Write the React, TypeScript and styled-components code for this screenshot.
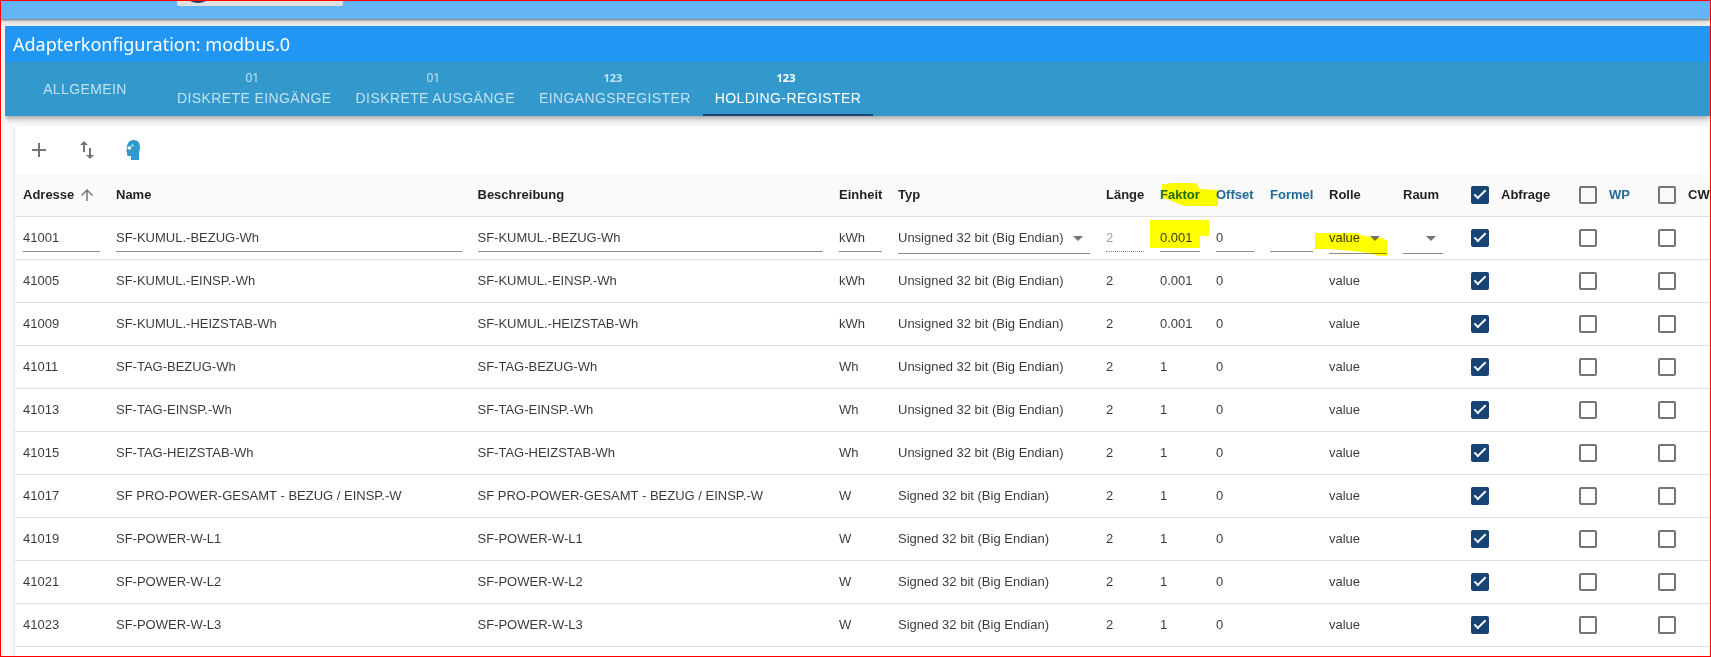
import React, { useState } from 'react';
import styled, { createGlobalStyle, css } from 'styled-components';

const GlobalStyle = createGlobalStyle`
  *, *::before, *::after { box-sizing: border-box; }
  body {
    margin: 0;
    background: #f5f5f5;
    font-family: "Liberation Sans", Arial, sans-serif;
    font-size: 13px;
    color: rgba(0, 0, 0, 0.87);
  }
`;

const Page = styled.div`
  height: 100vh;
  display: flex;
  flex-direction: column;
  overflow: hidden;
  border: 1px solid #ff0000;
`;

const AppBar = styled.header`
  flex: none;
  height: 18px;
  padding-left: 176px;
  background: #64b5f6;
  box-shadow: 0 1px 2px rgba(0, 0, 0, 0.5), 0 2px 8px rgba(0, 0, 0, 0.2);
`;

const HostChip = styled.div`
  width: 166px;
  height: 5px;
  padding-left: 11px;
  border-radius: 0 0 2px 2px;
  background: #e0e0e0;

  svg { display: block; }
`;

const Dialog = styled.main`
  flex: 1;
  min-height: 0;
  display: flex;
  flex-direction: column;
  margin: 7px 0 0 4px;
  background: #fafafa;
`;

const Title = styled.h1`
  flex: none;
  margin: 0;
  padding: 0 8px;
  background: #2196f3;
  color: #fff;
  font: 400 18px/36px "Noto Sans", "Open Sans", sans-serif;
`;

const Tabs = styled.nav`
  flex: none;
  display: flex;
  height: 54px;
  background: #3399cc;
  box-shadow: 0 2px 4px -1px rgba(0, 0, 0, 0.2), 0 4px 5px rgba(0, 0, 0, 0.14), 0 1px 10px rgba(0, 0, 0, 0.12);
  clip-path: inset(0 0 -12px 0);
`;

const Tab = styled.button<{ $active?: boolean; $plain?: boolean }>`
  display: flex;
  flex-direction: column;
  align-items: center;
  justify-content: center;
  min-width: ${(p) => (p.$plain ? 160 : 0)}px;
  padding: ${(p) => (p.$plain ? 2 : 0)}px 12px 0;
  border: 0;
  border-bottom: 2px solid ${(p) => (p.$active ? '#174475' : 'transparent')};
  background: none;
  color: ${(p) => (p.$active ? '#fff' : 'rgba(255, 255, 255, 0.7)')};
  font: 400 14px/20px "Liberation Sans", Arial, sans-serif;
  letter-spacing: 0.02857em;
  text-transform: uppercase;
  cursor: pointer;
`;

const TabMark = styled.span<{ $bold?: boolean }>`
  padding-right: 4px;
  font: ${(p) => (p.$bold ? '700 11px' : '400 12px')}/20px "Noto Sans", sans-serif;
  letter-spacing: 0;
`;

const Panel = styled.section`
  flex: 1;
  min-height: 0;
  margin: 10px 0 0 10px;
  overflow: hidden;
  border-radius: 4px 0 0 0;
  background: #fff;
  box-shadow: 0 1px 3px rgba(0, 0, 0, 0.2);
`;

const Toolbar = styled.div`
  display: flex;
  align-items: center;
  height: 48px;
`;

const IconButton = styled.button`
  display: flex;
  align-items: center;
  justify-content: center;
  width: 48px;
  height: 48px;
  padding: 0;
  border: 0;
  background: none;
  color: #757575;
  cursor: pointer;
`;

const Table = styled.table`
  width: 100%;
  table-layout: fixed;
  border-collapse: separate;
  border-spacing: 0;
`;

const cell = css`
  height: 43px;
  padding: 0 8px;
  border-bottom: 1px solid #e0e0e0;
  text-align: left;
  white-space: nowrap;
  line-height: 20px;
`;

const HeadCell = styled.th<{ $accent?: boolean }>`
  ${cell}
  background: #fafafa;
  font-weight: 700;
  color: ${(p) => (p.$accent ? '#226b96' : 'rgba(0, 0, 0, 0.87)')};
`;

const Cell = styled.td`
  ${cell}
  color: rgba(0, 0, 0, 0.78);
`;

const SortLabel = styled.span`
  display: flex;
  align-items: center;
  gap: 4px;
`;

const CheckLabel = styled.label`
  display: flex;
  align-items: center;
  gap: 12px;
  padding-left: 12px;
`;

const CheckBox = styled.input`
  appearance: none;
  flex: none;
  display: block;
  width: 18px;
  height: 18px;
  margin: 0;
  border: 2px solid #757575;
  border-radius: 2px;
  background: transparent;

  &:checked {
    border-color: #174475;
    background: #174475;
  }

  &:checked::before {
    content: '';
    display: block;
    width: 12px;
    height: 6px;
    margin: 2px 0 0 1px;
    border: solid #fff;
    border-width: 0 0 2px 2px;
    transform: rotate(-45deg);
  }
`;

const fieldBase = css`
  display: block;
  width: 100%;
  margin: 0;
  padding: 0;
  border: 0;
  border-bottom: 1px solid #8c8c8c;
  border-radius: 0;
  background: none;
  color: inherit;
  font: inherit;
  outline: 0;
`;

const Field = styled.input`
  ${fieldBase}
  height: 28px;

  &:disabled {
    border-bottom: 1px dotted #8c8c8c;
    color: rgba(0, 0, 0, 0.38);
  }
`;

const SelectWrap = styled.div`
  display: grid;
  align-items: center;

  > * { grid-area: 1 / 1; }
  svg { justify-self: end; pointer-events: none; }
`;

const Select = styled.select`
  ${fieldBase}
  appearance: none;
  height: 32px;
`;

type MarkPlace = 'head' | 'value' | 'role';

const Marked = styled.div`
  position: relative;
`;

const Highlight = styled.svg<{ $place: MarkPlace }>`
  position: absolute;
  mix-blend-mode: multiply;
  pointer-events: none;
  fill: #ffff00;
  top: ${(p) => ({ head: -2, value: -4, role: 11 })[p.$place]}px;
  left: ${(p) => ({ head: 2, value: -10, role: -14 })[p.$place]}px;
`;

const Caret = () => (
  <svg width="24" height="24" viewBox="0 0 24 24" fill="#757575"><path d="M7 10l5 5 5-5z" /></svg>
);

const Dropdown = ({ label, name }: { label: string; name: string }) => (
  <SelectWrap>
    <Select aria-label={name} defaultValue={label}><option>{label}</option></Select>
    <Caret />
  </SelectWrap>
);

type Register = { address: string; name: string; unit: string; type: string; factor: string };

const U32 = 'Unsigned 32 bit (Big Endian)';
const S32 = 'Signed 32 bit (Big Endian)';

const registers: Register[] = [
  { address: '41001', name: 'SF-KUMUL.-BEZUG-Wh', unit: 'kWh', type: U32, factor: '0.001' },
  { address: '41005', name: 'SF-KUMUL.-EINSP.-Wh', unit: 'kWh', type: U32, factor: '0.001' },
  { address: '41009', name: 'SF-KUMUL.-HEIZSTAB-Wh', unit: 'kWh', type: U32, factor: '0.001' },
  { address: '41011', name: 'SF-TAG-BEZUG-Wh', unit: 'Wh', type: U32, factor: '1' },
  { address: '41013', name: 'SF-TAG-EINSP.-Wh', unit: 'Wh', type: U32, factor: '1' },
  { address: '41015', name: 'SF-TAG-HEIZSTAB-Wh', unit: 'Wh', type: U32, factor: '1' },
  { address: '41017', name: 'SF PRO-POWER-GESAMT - BEZUG / EINSP.-W', unit: 'W', type: S32, factor: '1' },
  { address: '41019', name: 'SF-POWER-W-L1', unit: 'W', type: S32, factor: '1' },
  { address: '41021', name: 'SF-POWER-W-L2', unit: 'W', type: S32, factor: '1' },
  { address: '41023', name: 'SF-POWER-W-L3', unit: 'W', type: S32, factor: '1' },
];

const tabs = [
  { label: 'Allgemein', mark: '' },
  { label: 'Diskrete Eingänge', mark: '01' },
  { label: 'Diskrete Ausgänge', mark: '01' },
  { label: 'Eingangsregister', mark: '123' },
  { label: 'Holding-Register', mark: '123' },
];

// 0 marks the columns that share the remaining width
const columnWidths = [93, 0, 0, 59, 208, 54, 56, 54, 59, 74, 56, 108, 79, 72];

const Column = styled.col<{ $width: number }>`
  width: ${(p) => (p.$width ? `${p.$width}px` : 'auto')};
`;

const Checks = ({ address }: { address: string }) => (
  <>
    {['Abfrage', 'WP', 'CW'].map((name) => (
      <Cell key={name}>
        <CheckLabel><CheckBox type="checkbox" aria-label={`${name} ${address}`} defaultChecked={name === 'Abfrage'} /></CheckLabel>
      </Cell>
    ))}
  </>
);

const EditRow = ({ row }: { row: Register }) => (
  <tr>
    <Cell><Field aria-label="Adresse" defaultValue={row.address} /></Cell>
    <Cell><Field aria-label="Name" defaultValue={row.name} /></Cell>
    <Cell><Field aria-label="Beschreibung" defaultValue={row.name} /></Cell>
    <Cell><Field aria-label="Einheit" defaultValue={row.unit} /></Cell>
    <Cell><Dropdown name="Typ" label={row.type} /></Cell>
    <Cell><Field aria-label="Länge" defaultValue="2" disabled /></Cell>
    <Cell>
      <Marked>
        <Field aria-label="Faktor" defaultValue={row.factor} />
        <Highlight $place="value" width="59" height="28"><path d="M0 0H59V16H50V28H0z" /></Highlight>
      </Marked>
    </Cell>
    <Cell><Field aria-label="Offset" defaultValue="0" /></Cell>
    <Cell><Field aria-label="Formel" defaultValue="" /></Cell>
    <Cell>
      <Marked>
        <Dropdown name="Rolle" label="value" />
        <Highlight $place="role" width="72" height="24"><path d="M0 0H42L46 2L60 5H68L72 8V23H64L54 20L38 18L15 16H0z" /></Highlight>
      </Marked>
    </Cell>
    <Cell><Dropdown name="Raum" label="" /></Cell>
    <Checks address={row.address} />
  </tr>
);

const ViewRow = ({ row }: { row: Register }) => (
  <tr>
    <Cell>{row.address}</Cell>
    <Cell>{row.name}</Cell>
    <Cell>{row.name}</Cell>
    <Cell>{row.unit}</Cell>
    <Cell>{row.type}</Cell>
    <Cell>2</Cell>
    <Cell>{row.factor}</Cell>
    <Cell>0</Cell>
    <Cell />
    <Cell>value</Cell>
    <Cell />
    <Checks address={row.address} />
  </tr>
);

export default function App() {
  const [active, setActive] = useState(4);
  return (
    <Page>
      <GlobalStyle />
      <AppBar>
        <HostChip>
          <svg width="20" height="3"><path d="M2 0H18Q10 4 2 0z" fill="#174475" /></svg>
        </HostChip>
      </AppBar>
      <Dialog>
        <Title>Adapterkonfiguration: modbus.0</Title>
        <Tabs>
          {tabs.map((tab, i) => (
            <Tab key={tab.label} $active={i === active} $plain={!tab.mark} onClick={() => setActive(i)}>
              {tab.mark && <TabMark $bold={tab.mark === '123'}>{tab.mark}</TabMark>}
              {tab.label}
            </Tab>
          ))}
        </Tabs>
        <Panel>
          <Toolbar>
            <IconButton aria-label="Hinzufügen">
              <svg width="24" height="24" viewBox="0 0 24 24" fill="currentColor"><path d="M19 13h-6v6h-2v-6H5v-2h6V5h2v6h6v2z" /></svg>
            </IconButton>
            <IconButton aria-label="Importieren/Exportieren">
              <svg width="24" height="24" viewBox="0 0 24 24" fill="currentColor"><path d="M16 17.01V10h-2v7.01h-3L15 21l4-3.99h-3zM9 3L5 6.99h3V14h2V6.99h3L9 3z" /></svg>
            </IconButton>
            <IconButton aria-label="Expertenmodus">
              <svg width="20" height="20" viewBox="0 0 20 20">
                <path fill="#3399cc" d="M2 6Q3 0 8.500 0Q15 0 15 7Q15 10 14 12V20H6V16H3Q2 16 2 14V12L1 11L2 9z" />
                <circle cx="4.500" cy="8" r="1.800" fill="#fff" />
                <circle cx="7.500" cy="5.500" r="1" fill="#fff" />
              </svg>
            </IconButton>
          </Toolbar>
          <Table>
            <colgroup>
              {columnWidths.map((width, i) => <Column key={i} $width={width} />)}
            </colgroup>
            <thead>
              <tr>
                <HeadCell>
                  <SortLabel>
                    Adresse
                    <svg width="18" height="18" viewBox="0 0 24 24" fill="#757575"><path d="M4 12l1.410 1.410L11 7.830V20h2V7.830l5.580 5.590L20 12l-8-8-8 8z" /></svg>
                  </SortLabel>
                </HeadCell>
                <HeadCell>Name</HeadCell>
                <HeadCell>Beschreibung</HeadCell>
                <HeadCell>Einheit</HeadCell>
                <HeadCell>Typ</HeadCell>
                <HeadCell>Länge</HeadCell>
                <HeadCell $accent>
                  <Marked>
                    Faktor
                    <Highlight $place="head" width="56" height="23"><path d="M0 1H5L9 0H32L36 2L37 6L56 7V23H24L16 21L8 17L0 15z" /></Highlight>
                  </Marked>
                </HeadCell>
                <HeadCell $accent>Offset</HeadCell>
                <HeadCell $accent>Formel</HeadCell>
                <HeadCell>Rolle</HeadCell>
                <HeadCell>Raum</HeadCell>
                <HeadCell><CheckLabel><CheckBox type="checkbox" defaultChecked />Abfrage</CheckLabel></HeadCell>
                <HeadCell $accent><CheckLabel><CheckBox type="checkbox" />WP</CheckLabel></HeadCell>
                <HeadCell><CheckLabel><CheckBox type="checkbox" />CW</CheckLabel></HeadCell>
              </tr>
            </thead>
            <tbody>
              {registers.map((row, i) => (i === 0 ? <EditRow key={row.address} row={row} /> : <ViewRow key={row.address} row={row} />))}
            </tbody>
          </Table>
        </Panel>
      </Dialog>
    </Page>
  );
}
